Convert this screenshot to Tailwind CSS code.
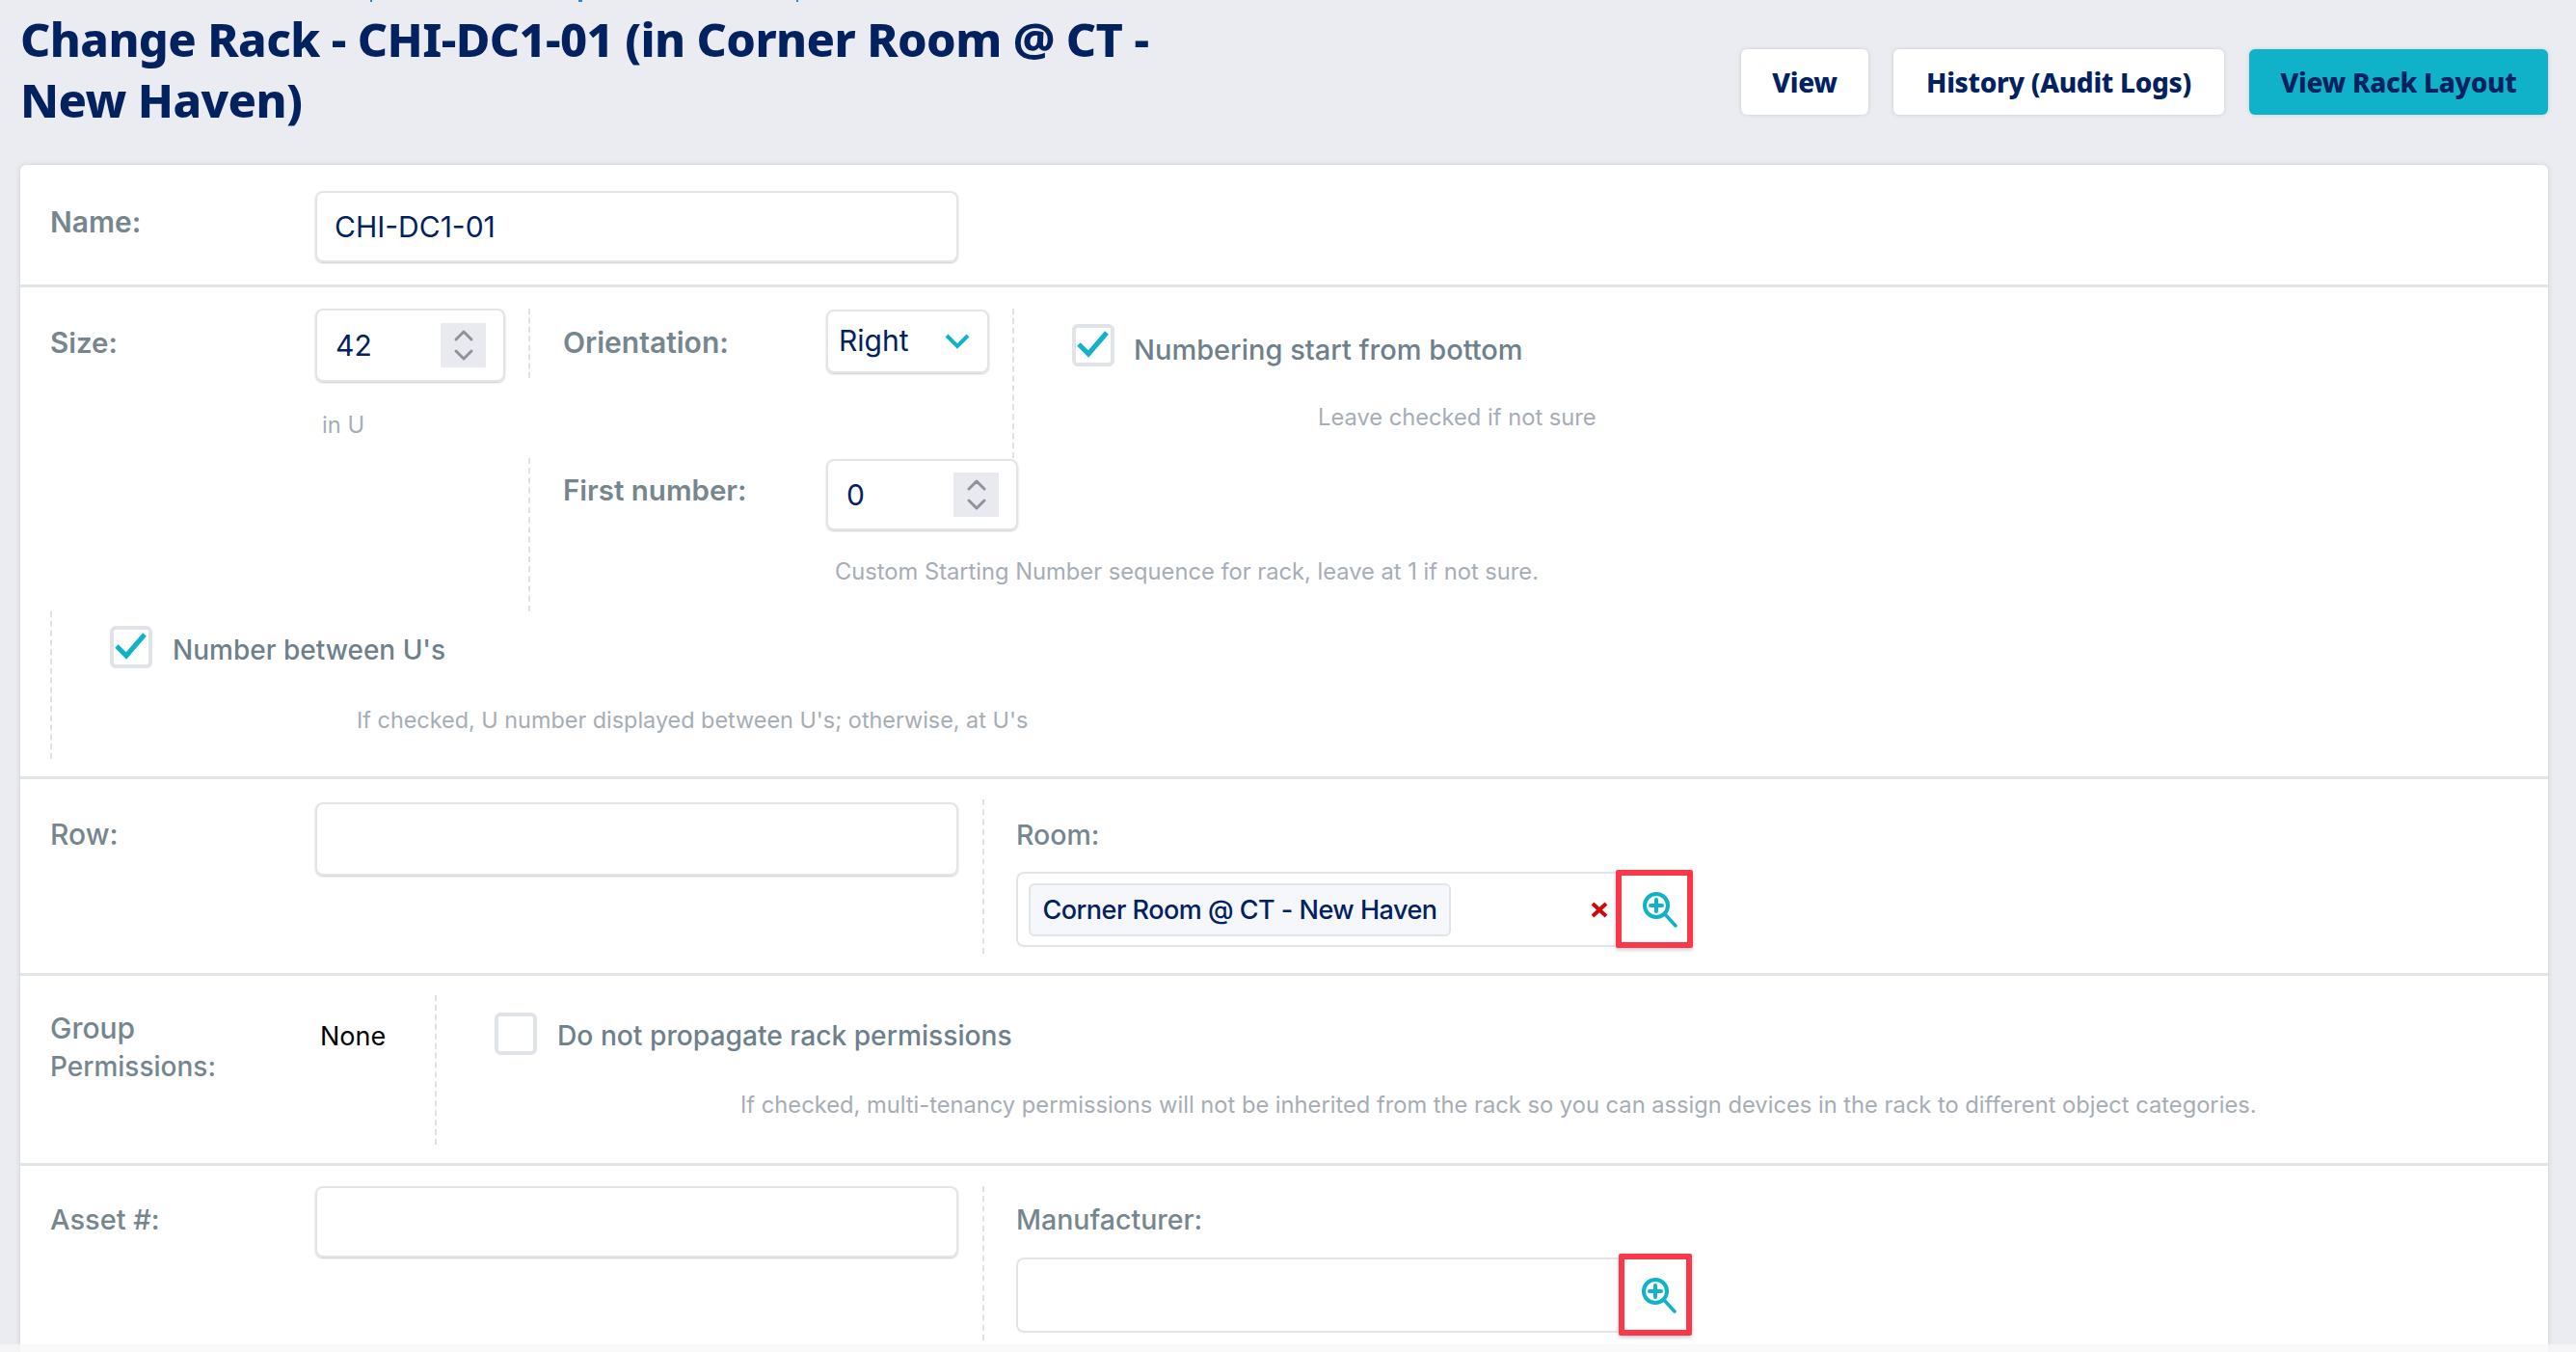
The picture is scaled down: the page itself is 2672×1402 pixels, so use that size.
<!DOCTYPE html>
<html lang="en">
<head>
    <meta charset="UTF-8">
    <meta name="viewport" content="width=device-width, initial-scale=1.0">
    <title>Change Rack</title>
    <script src="https://cdn.jsdelivr.net/npm/@tailwindcss/browser@4"></script>
</head>
<body class="relative h-[1402px] overflow-hidden bg-[#ebecf1] font-['Inter',sans-serif] text-[#01215f]">
    <!-- bottoms of the breadcrumb that scrolled off -->
    <div class="absolute left-[384px] top-0 h-[2px] w-[2px] bg-[#2f80e0]"></div>
    <div class="absolute left-[600px] top-0 h-[2px] w-[4px] bg-[#2f80e0]"></div>
    <div class="absolute left-[826px] top-0 h-[2px] w-[2px] bg-[#2f80e0]"></div>

    <!-- header -->
    <div class="flex h-[171px] justify-between pl-[21px] pr-[29px]">
        <h1 class="w-[1240px] pt-[9px] font-['Noto_Sans',sans-serif] text-[48.7px] font-extrabold leading-[63px] tracking-[-0.6px]">Change Rack - CHI-DC1-01 (in Corner Room @ CT - New Haven)</h1>
        <div class="flex gap-[26px] pt-[51px] font-['Noto_Sans',sans-serif] text-[28px] font-extrabold tracking-[-0.3px]">
            <a class="flex h-[68px] w-[132px] items-center justify-center rounded-[6px] bg-white shadow-[0_0_4px_#c9cace]">View</a>
            <a class="flex h-[68px] w-[343px] items-center justify-center rounded-[6px] bg-white shadow-[0_0_4px_#c9cace]">History (Audit Logs)</a>
            <a class="flex h-[68px] w-[310px] items-center justify-center rounded-[6px] bg-[#0fb2c8] shadow-[0_0_4px_#c9cace]">View Rack Layout</a>
        </div>
    </div>

    <!-- form card -->
    <div class="ml-[21px] mr-[29px] rounded-t-[6px] bg-white pt-[2px] shadow-[0_0_5px_#c9cace] text-[30px] leading-[39px]">

        <!-- name -->
        <div class="flex h-[125px] border-b-[3px] border-[#e1e4e8] pl-[31px] pt-[25px]">
            <label class="w-[275px] pt-[13px] font-semibold text-[#76868f]">Name:</label>
            <div class="flex h-[74px] w-[667px] items-center rounded-[8px] border-2 border-[#e3e4e6] pl-[18px] shadow-[0_1px_2px_#c9cace]">CHI-DC1-01</div>
        </div>

        <!-- size / orientation / numbering -->
        <div class="grid h-[510px] grid-cols-[496px_502px_1fr] grid-rows-[155px_159px_153px] border-b-[3px] border-[#e1e4e8] pl-[31px] pt-[22px]">
            <div class="flex">
                <label class="w-[275px] pt-[16px] text-[29.5px] font-semibold text-[#76868f]">Size:</label>
                <div>
                    <div class="flex h-[76px] w-[197px] items-center justify-between rounded-[8px] border-2 border-[#e3e4e6] pl-[19px] pr-[18px] shadow-[0_1px_2px_#c9cace]">
                        <span>42</span>
                        <div class="flex h-[46px] w-[47px] items-center justify-center bg-[#e9eaef]">
                            <svg width="22" height="34" viewBox="0 0 22 34" fill="none" stroke="#8d929c" stroke-width="3" stroke-linecap="round" stroke-linejoin="round"><path d="M3 11 11 3l8 8M3 23l8 8 8-8"/></svg>
                        </div>
                    </div>
                    <p class="ml-[7px] mt-[25px] text-[23.7px] leading-[40px] text-[#a6adb6]">in U</p>
                </div>
            </div>
            <div class="flex h-[72px] border-l-2 border-dashed border-[#dfe1e6] pl-[34px]">
                <label class="w-[273px] pt-[16px] font-semibold text-[#76868f]">Orientation:</label>
                <div class="mt-[1px] flex h-[66px] w-[169px] items-center justify-between rounded-[8px] border-2 border-[#e3e4e6] pl-[11px] pr-[18px] shadow-[0_1px_2px_#c9cace]">
                    <span class="-mt-[1px]">Right</span>
                    <svg width="26" height="16" viewBox="0 0 26 16" fill="none" stroke="#0fb2c8" stroke-width="4"><path d="M2 2 13 13 24 2"/></svg>
                </div>
            </div>
            <div class="border-l-2 border-dashed border-[#dfe1e6] pl-[60px]">
                <div class="flex items-center gap-[20px] pt-[13px]">
                    <div class="relative h-[44px] w-[44px] rounded-[6px] border-[4px] border-[#e0e3e8]">
                        <svg class="absolute left-[1px] top-[2px]" width="34" height="30" viewBox="0 0 34 30" fill="none" stroke="#0fb2c8" stroke-width="5"><path d="M2 15l10 10L31 3"/></svg>
                    </div>
                    <span class="pt-[10px] text-[29px] font-medium text-[#6e808b]">Numbering start from bottom</span>
                </div>
                <p class="ml-[255px] mt-[31px] text-[23.7px] leading-[40px] text-[#a6adb6]">Leave checked if not sure</p>
            </div>

            <div class="col-span-2 col-start-2 border-l-2 border-dashed border-[#dfe1e6] pl-[34px]">
                <div class="flex">
                    <label class="w-[273px] pt-[14px] text-[29.5px] font-semibold text-[#76868f]">First number:</label>
                    <div class="mt-[1px] flex h-[74px] w-[199px] items-center justify-between rounded-[8px] border-2 border-[#e3e4e6] pl-[19px] pr-[18px] shadow-[0_1px_2px_#c9cace]">
                        <span>0</span>
                        <div class="flex h-[46px] w-[47px] items-center justify-center bg-[#e9eaef]">
                            <svg width="22" height="34" viewBox="0 0 22 34" fill="none" stroke="#8d929c" stroke-width="3" stroke-linecap="round" stroke-linejoin="round"><path d="M3 11 11 3l8 8M3 23l8 8 8-8"/></svg>
                        </div>
                    </div>
                </div>
                <p class="ml-[282px] mt-[23px] text-[23.7px] leading-[40px] text-[#a6adb6]">Custom Starting Number sequence for rack, leave at 1 if not sure.</p>
            </div>

            <div class="col-span-3 border-l-2 border-dashed border-[#dfe1e6] pl-[60px]">
                <div class="flex items-center gap-[21px] pt-[14px]">
                    <div class="relative h-[44px] w-[44px] rounded-[6px] border-[4px] border-[#e0e3e8]">
                        <svg class="absolute left-[1px] top-[2px]" width="34" height="30" viewBox="0 0 34 30" fill="none" stroke="#0fb2c8" stroke-width="5"><path d="M2 15l10 10L31 3"/></svg>
                    </div>
                    <span class="pt-[7px] text-[28px] font-medium text-[#6e808b]">Number between U's</span>
                </div>
                <p class="ml-[256px] mt-[33px] text-[23.4px] leading-[40px] text-[#a6adb6]">If checked, U number displayed between U's; otherwise, at U's</p>
            </div>
        </div>

        <!-- row / room -->
        <div class="flex h-[204px] border-b-[3px] border-[#e1e4e8] pl-[31px] pt-[21px]">
            <label class="w-[275px] pt-[17px] font-medium text-[#76868f]">Row:</label>
            <div class="mt-[3px] h-[76px] w-[667px] rounded-[8px] border-2 border-[#e3e4e6] shadow-[0_1px_2px_#c9cace]"></div>
            <div class="ml-[25px] h-[160px] border-l-2 border-dashed border-[#dfe1e6] pl-[33px]">
                <label class="block pt-[17px] text-[28.5px] font-medium text-[#76868f]">Room:</label>
                <div class="mt-[19px] flex">
                    <div class="flex h-[78px] w-[627px] items-center justify-between rounded-l-[8px] border-2 border-r-0 border-[#e1e4e8] pl-[11px] pr-[13px]">
                        <span class="flex h-[55px] w-[438px] items-center justify-center whitespace-nowrap rounded-[6px] border-2 border-[#e1e4e8] bg-[#f6f7fa] text-[27px] font-medium tracking-[-0.5px]">Corner Room @ CT - New Haven</span>
                        <svg width="18" height="18" viewBox="0 0 18 18" fill="none" stroke="#cc0a0a" stroke-width="4"><path d="M2 3l14 13M16 3 2 16"/></svg>
                    </div>
                    <div class="-mt-[2px] -ml-[5px] flex h-[81px] w-[80px] items-center justify-center rounded-[2px] border-[6px] border-[#fb3849] bg-white pl-[12px] shadow-[0_2px_4px_#c9cace]">
                        <svg width="38" height="38" viewBox="0 0 38 38" fill="none" stroke="#0fb2c8" stroke-linecap="round"><circle cx="15" cy="15" r="12" stroke-width="4"/><path d="M24 24 35 36" stroke-width="3.5"/><path d="M15 9v12M9 15h12" stroke-width="4"/></svg>
                    </div>
                </div>
            </div>
        </div>

        <!-- group permissions -->
        <div class="flex h-[197px] border-b-[3px] border-[#e1e4e8] pl-[31px] pt-[20px]">
            <label class="w-[276px] pt-[15px] leading-[39px] font-medium text-[#76868f]">Group<br><span class="text-[28px]">Permissions:</span></label>
            <span class="ml-[4px] w-[120px] pt-[23px] text-[27px] text-black">None</span>
            <div class="-ml-[1px] h-[155px] border-l-2 border-dashed border-[#dfe1e6] pl-[60px]">
                <div class="flex items-center gap-[21px] pt-[17px]">
                    <div class="h-[44px] w-[44px] rounded-[6px] border-[4px] border-[#e0e3e8]"></div>
                    <span class="pt-[6px] text-[28.2px] font-medium text-[#6e808b]">Do not propagate rack permissions</span>
                </div>
                <p class="ml-[255px] mt-[32px] whitespace-nowrap text-[23.7px] leading-[40px] text-[#a6adb6]">If checked, multi-tenancy permissions will not be inherited from the rack so you can assign devices in the rack to different object categories.</p>
            </div>
        </div>

        <!-- asset / manufacturer -->
        <div class="flex h-[194px] pl-[31px] pt-[21px]">
            <label class="w-[275px] pt-[15px] text-[29px] font-medium text-[#76868f]">Asset #:</label>
            <div class="h-[74px] w-[667px] rounded-[8px] border-2 border-[#e3e4e6] shadow-[0_1px_2px_#c9cace]"></div>
            <div class="ml-[25px] h-[160px] border-l-2 border-dashed border-[#dfe1e6] pl-[33px]">
                <label class="block pt-[15px] text-[28.5px] font-medium text-[#76868f]">Manufacturer:</label>
                <div class="mt-[20px] flex">
                    <div class="h-[78px] w-[627px] rounded-l-[8px] border-2 border-r-0 border-[#e1e4e8]"></div>
                    <div class="-mt-[4px] -ml-[2px] flex h-[85px] w-[76px] items-center justify-center rounded-[2px] border-[6px] border-[#fb3849] bg-white pl-[8px] shadow-[0_2px_4px_#c9cace]">
                        <svg width="38" height="38" viewBox="0 0 38 38" fill="none" stroke="#0fb2c8" stroke-linecap="round"><circle cx="15" cy="15" r="12" stroke-width="4"/><path d="M24 24 35 36" stroke-width="3.5"/><path d="M15 9v12M9 15h12" stroke-width="4"/></svg>
                    </div>
                </div>
            </div>
        </div>
    </div>

    <!-- page fold at the bottom edge -->
    <div class="absolute bottom-0 left-0 h-[8px] w-full bg-[#f7f8f9]/80"></div>
</body>
</html>
